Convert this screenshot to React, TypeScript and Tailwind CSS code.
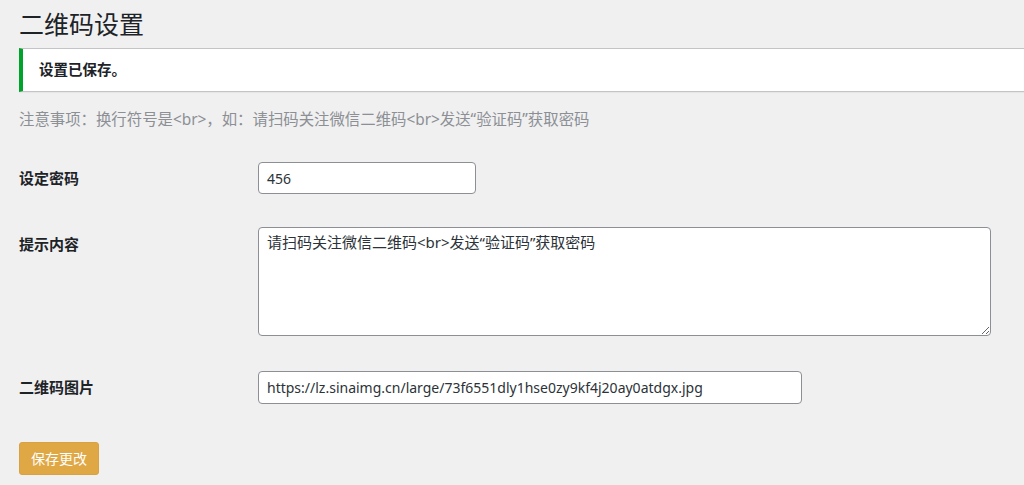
import React from "react";

const font = { fontFamily: '"Noto Sans", "Noto Sans CJK SC", sans-serif' };

export default function App() {
  return (
    <div
      className="min-h-[485px] w-full bg-[#f0f0f1] overflow-hidden text-[#1d2327]"
      style={font}
    >
      <div className="pl-[19px]">
        <h1 className="pt-[8px] text-[25px] leading-[32px] font-normal text-[#1d2327]">
          二维码设置
        </h1>
        <div className="mt-[8px] -mr-[10px] flex h-[44px] items-center border border-[#c3c4c7] border-l-[4px] border-l-[#00a32a] bg-white pl-[16px] shadow-[0_1px_1px_rgba(0,0,0,0.04)]">
          <p className="text-[14.5px] font-semibold text-[#1d2327]">设置已保存。</p>
        </div>
        <p className="mt-[18px] text-[15.4px] leading-[20px] text-[#8c8f94]">
          注意事项：换行符号是&lt;br&gt;，如：请扫码关注微信二维码&lt;br&gt;发送“验证码”获取密码
        </p>

        <div className="mt-[32px] flex items-center">
          <div className="w-[239px] text-[15px] font-semibold">设定密码</div>
          <input
            readOnly
            value="456"
            className="h-[32px] w-[218px] rounded-[4px] border border-[#8c8f94] bg-white px-[8px] text-[14px] text-[#2c3338] outline-none"
            style={font}
          />
        </div>

        <div className="mt-[33px] flex items-start">
          <div className="w-[239px] pt-[6px] text-[15px] font-semibold">提示内容</div>
          <textarea
            readOnly
            value="请扫码关注微信二维码<br>发送“验证码”获取密码"
            className="h-[109px] w-[733px] rounded-[4px] border border-[#8c8f94] bg-white px-[8px] py-[4px] text-[15px] leading-[20px] text-[#2c3338] outline-none"
            style={font}
          />
        </div>

        <div className="mt-[35px] flex items-center">
          <div className="w-[239px] text-[15px] font-semibold">二维码图片</div>
          <input
            readOnly
            value="https://lz.sinaimg.cn/large/73f6551dly1hse0zy9kf4j20ay0atdgx.jpg"
            className="h-[33px] w-[544px] rounded-[4px] border border-[#8c8f94] bg-white px-[8px] text-[14px] text-[#2c3338] outline-none"
            style={font}
          />
        </div>

        <button
          className="mt-[38px] h-[33px] w-[80px] rounded-[3px] border border-[#d9a140] bg-[#e0a845] text-[14px] text-white"
          style={font}
        >
          保存更改
        </button>
      </div>
    </div>
  );
}
